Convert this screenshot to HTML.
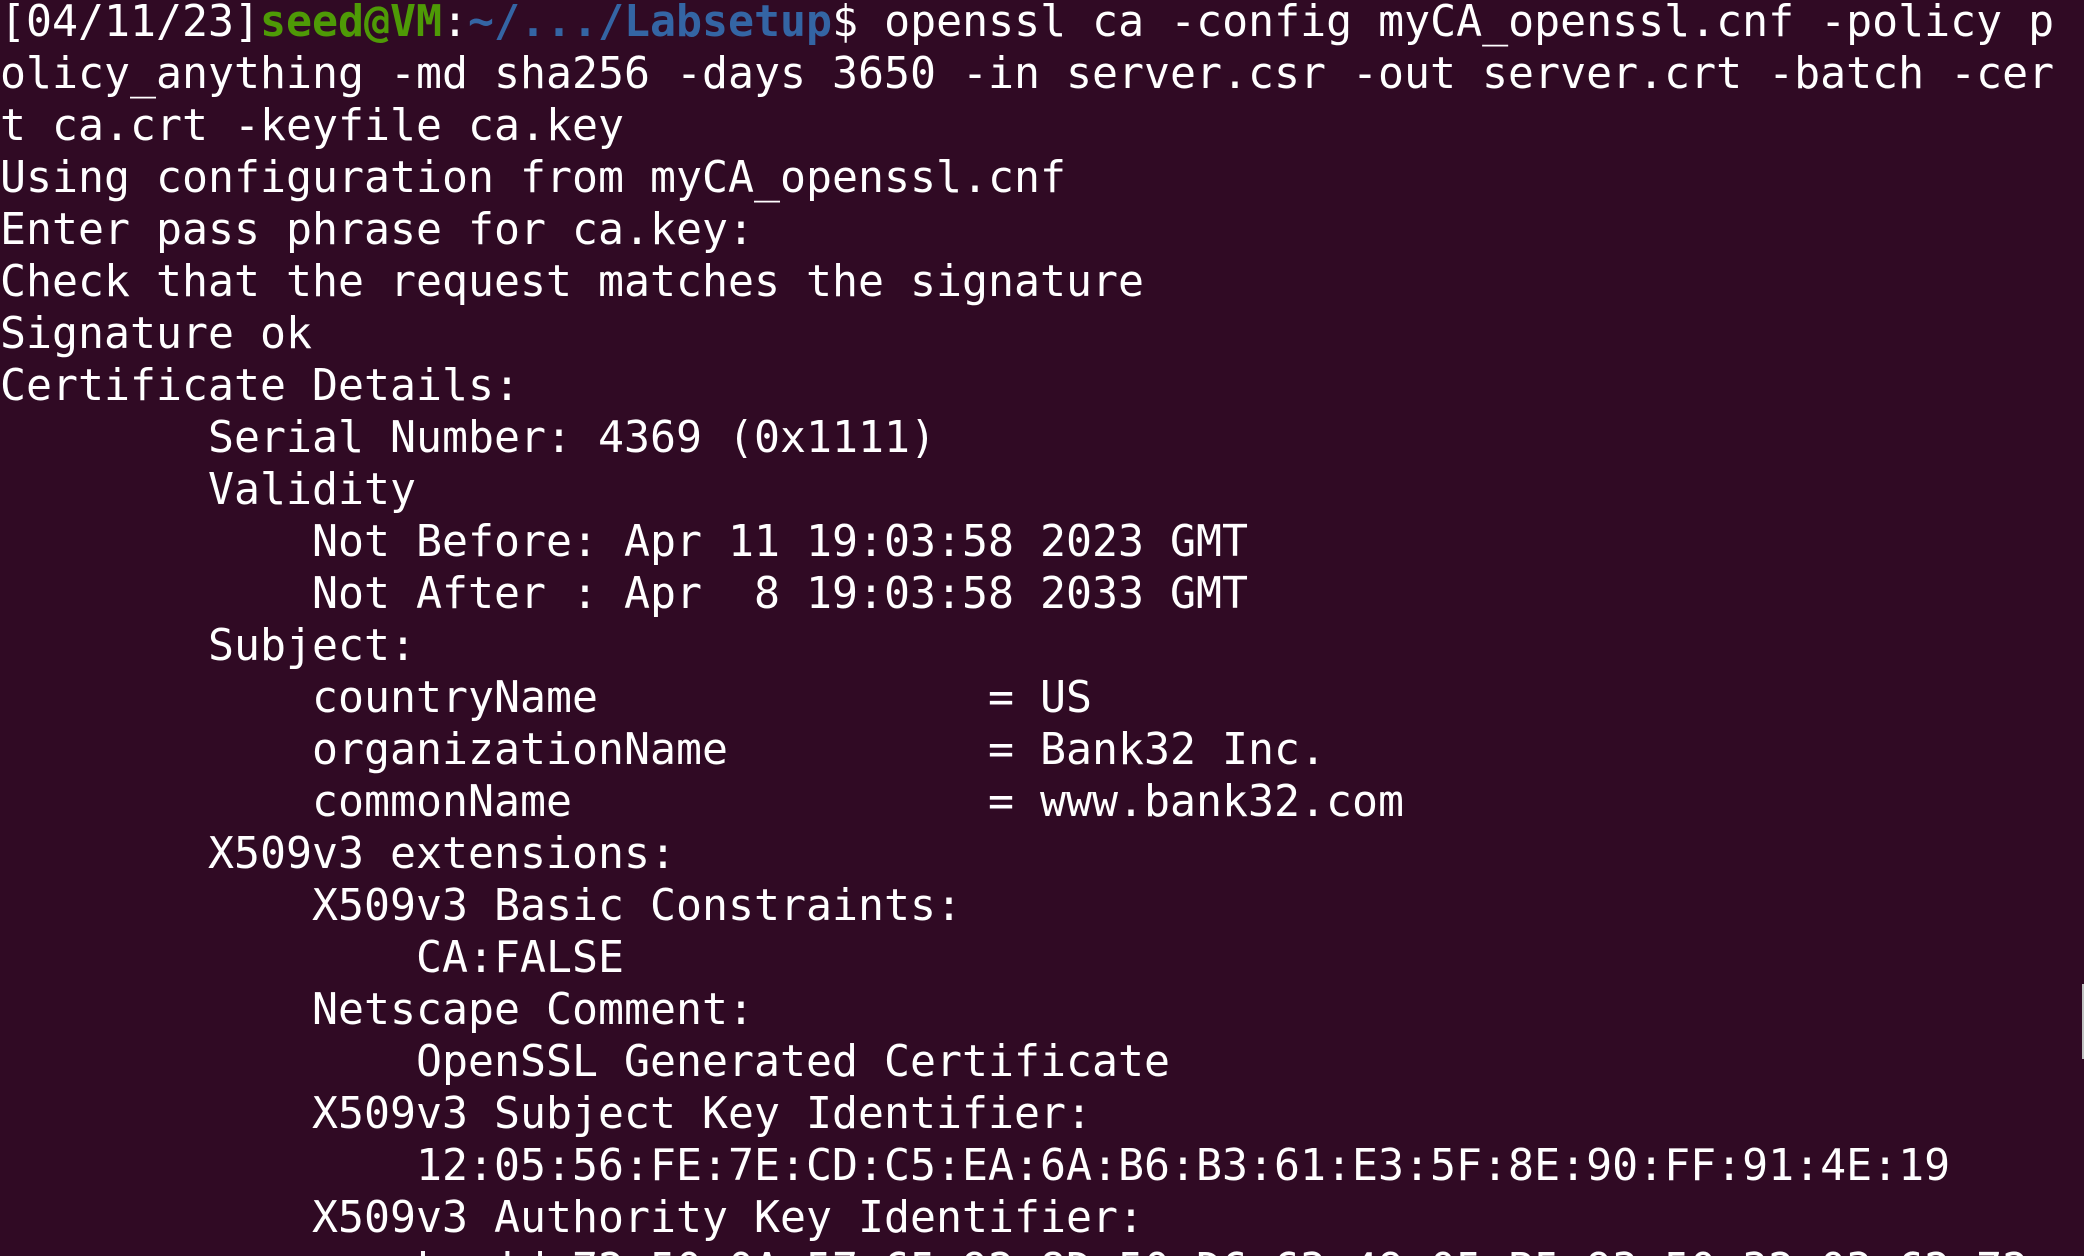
<!DOCTYPE html>
<html><head><meta charset="utf-8"><style>
html,body{margin:0;padding:0;background:#300a24;width:2084px;height:1256px;overflow:hidden}
#wrap{position:relative;width:2084px;height:1256px;overflow:hidden;background:#300a24}
pre{margin:0;position:absolute;left:0;top:-4px;font-family:"DejaVu Sans Mono","Liberation Mono",monospace;font-size:43.2px;line-height:52px;color:#ffffff;white-space:pre}
.g{color:#4e9a06;font-weight:bold}.b{color:#3465a4;font-weight:bold}
.bar{position:absolute;left:2082px;top:984px;width:2px;height:75px;background:#c0c0c0}
</style></head><body><div id="wrap">
<pre>[04/11/23]<span class="g">seed@VM</span>:<span class="b">~/.../Labsetup</span>$ openssl ca -config myCA_openssl.cnf -policy p
olicy_anything -md sha256 -days 3650 -in server.csr -out server.crt -batch -cer
t ca.crt -keyfile ca.key
Using configuration from myCA_openssl.cnf
Enter pass phrase for ca.key:
Check that the request matches the signature
Signature ok
Certificate Details:
        Serial Number: 4369 (0x1111)
        Validity
            Not Before: Apr 11 19:03:58 2023 GMT
            Not After : Apr  8 19:03:58 2033 GMT
        Subject:
            countryName               = US
            organizationName          = Bank32 Inc.
            commonName                = www.bank32.com
        X509v3 extensions:
            X509v3 Basic Constraints:
                CA:FALSE
            Netscape Comment:
                OpenSSL Generated Certificate
            X509v3 Subject Key Identifier:
                12:05:56:FE:7E:CD:C5:EA:6A:B6:B3:61:E3:5F:8E:90:FF:91:4E:19
            X509v3 Authority Key Identifier:
                keyid:72:50:0A:57:65:92:8D:50:D6:63:49:05:B5:93:50:32:03:62:72</pre>
<div class="bar"></div>
</div></body></html>
